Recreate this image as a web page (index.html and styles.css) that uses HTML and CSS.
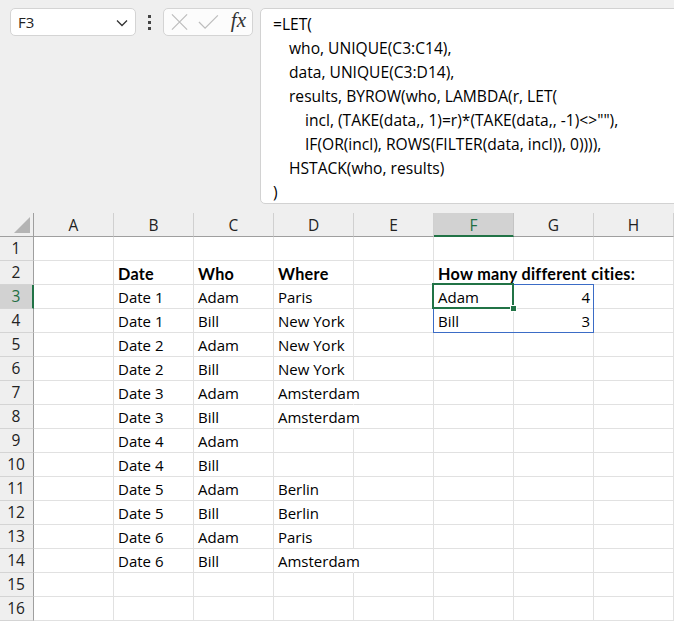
FILE: index.html
```html
<!DOCTYPE html>
<html>
<head>
<meta charset="utf-8">
<link rel="stylesheet" href="styles.css">
</head>
<body>
<div class="top">
  <div class="namebox">
    <span class="ref">F3</span>
    <svg class="chev" width="12" height="8" viewBox="0 0 12 8"><path d="M1 1.5 L6 6.5 L11 1.5" fill="none" stroke="#333" stroke-width="1.3"/></svg>
  </div>
  <div class="dots"><i></i><i></i><i></i></div>
  <div class="fxbox">
    <svg width="18" height="18" viewBox="0 0 18 18"><path d="M1 1 L17 17 M17 1 L1 17" stroke="#bdbdbd" stroke-width="1.3" fill="none"/></svg>
    <svg width="22" height="16" viewBox="0 0 22 16"><path d="M1 8 L7.5 14.5 L21 1" stroke="#bdbdbd" stroke-width="1.3" fill="none"/></svg>
    <span class="fx">fx</span>
  </div>
  <div class="formula">
    <div class="ln">=LET(</div>
    <div class="ln i1">who, UNIQUE(C3:C14),</div>
    <div class="ln i1">data, UNIQUE(C3:D14),</div>
    <div class="ln i1">results, BYROW(who, LAMBDA(r, LET(</div>
    <div class="ln i2">incl, (TAKE(data,, 1)=r)*(TAKE(data,, -1)&lt;&gt;""),</div>
    <div class="ln i2">IF(OR(incl), ROWS(FILTER(data, incl)), 0)))),</div>
    <div class="ln i1">HSTACK(who, results)</div>
    <div class="ln">)</div>
  </div>
</div>

<div class="sheet">
  <div class="corner"><span class="tri"></span></div>
  <div class="ch">A</div><div class="ch">B</div><div class="ch">C</div><div class="ch">D</div><div class="ch">E</div><div class="ch sel">F</div><div class="ch">G</div><div class="ch">H</div>

  <div class="rh">1</div><div class="c"></div><div class="c"></div><div class="c"></div><div class="c"></div><div class="c"></div><div class="c"></div><div class="c"></div><div class="c"></div>

  <div class="rh">2</div><div class="c"></div><div class="c b">Date</div><div class="c b">Who</div><div class="c b">Where</div><div class="c"></div><div class="c b ov">How many different cities:</div><div class="c ov"></div><div class="c"></div>

  <div class="rh sel">3</div><div class="c"></div><div class="c">Date 1</div><div class="c">Adam</div><div class="c">Paris</div><div class="c"></div><div class="c">Adam</div><div class="c r">4</div><div class="c"></div>

  <div class="rh">4</div><div class="c"></div><div class="c">Date 1</div><div class="c">Bill</div><div class="c">New York</div><div class="c"></div><div class="c">Bill</div><div class="c r">3</div><div class="c"></div>

  <div class="rh">5</div><div class="c"></div><div class="c">Date 2</div><div class="c">Adam</div><div class="c">New York</div><div class="c"></div><div class="c"></div><div class="c"></div><div class="c"></div>

  <div class="rh">6</div><div class="c"></div><div class="c">Date 2</div><div class="c">Bill</div><div class="c">New York</div><div class="c"></div><div class="c"></div><div class="c"></div><div class="c"></div>

  <div class="rh">7</div><div class="c"></div><div class="c">Date 3</div><div class="c">Adam</div><div class="c ov">Amsterdam</div><div class="c"></div><div class="c"></div><div class="c"></div><div class="c"></div>

  <div class="rh">8</div><div class="c"></div><div class="c">Date 3</div><div class="c">Bill</div><div class="c ov">Amsterdam</div><div class="c"></div><div class="c"></div><div class="c"></div><div class="c"></div>

  <div class="rh">9</div><div class="c"></div><div class="c">Date 4</div><div class="c">Adam</div><div class="c"></div><div class="c"></div><div class="c"></div><div class="c"></div><div class="c"></div>

  <div class="rh">10</div><div class="c"></div><div class="c">Date 4</div><div class="c">Bill</div><div class="c"></div><div class="c"></div><div class="c"></div><div class="c"></div><div class="c"></div>

  <div class="rh">11</div><div class="c"></div><div class="c">Date 5</div><div class="c">Adam</div><div class="c">Berlin</div><div class="c"></div><div class="c"></div><div class="c"></div><div class="c"></div>

  <div class="rh">12</div><div class="c"></div><div class="c">Date 5</div><div class="c">Bill</div><div class="c">Berlin</div><div class="c"></div><div class="c"></div><div class="c"></div><div class="c"></div>

  <div class="rh">13</div><div class="c"></div><div class="c">Date 6</div><div class="c">Adam</div><div class="c">Paris</div><div class="c"></div><div class="c"></div><div class="c"></div><div class="c"></div>

  <div class="rh">14</div><div class="c"></div><div class="c">Date 6</div><div class="c">Bill</div><div class="c ov">Amsterdam</div><div class="c"></div><div class="c"></div><div class="c"></div><div class="c"></div>

  <div class="rh">15</div><div class="c"></div><div class="c"></div><div class="c"></div><div class="c"></div><div class="c"></div><div class="c"></div><div class="c"></div><div class="c"></div>

  <div class="rh">16</div><div class="c"></div><div class="c"></div><div class="c"></div><div class="c"></div><div class="c"></div><div class="c"></div><div class="c"></div><div class="c"></div>

  <div class="spill"></div>
  <div class="cursor"><span class="handle"></span></div>
</div>
</body>
</html>
```

FILE: styles.css
```css
* { box-sizing: border-box; }
html, body { margin: 0; padding: 0; }
body {
  background: #efefef;
  font-family: "Open Sans", "Noto Sans", sans-serif;
  color: #000;
  width: 674px;
  height: 621px;
  overflow: hidden;
}

.top {
  height: 213px;
  display: flex;
  align-items: flex-start;
  padding: 8px 0 0 10px;
}
.namebox {
  width: 126px;
  height: 28px;
  background: #fff;
  border: 1px solid #d4d4d4;
  border-radius: 5px;
  display: flex;
  align-items: center;
  justify-content: space-between;
  padding: 0 7px 0 7px;
}
.ref {
  font-family: "Open Sans", "Noto Sans", sans-serif;
  font-size: 15px;
  color: #222;
}
.chev { margin-top: 1px; }
.dots {
  width: 27px;
  height: 28px;
  display: flex;
  flex-direction: column;
  align-items: center;
  justify-content: center;
  gap: 3px;
}
.dots i {
  display: block;
  width: 3px;
  height: 3px;
  background: #444;
}
.fxbox {
  width: 90px;
  height: 28px;
  background: #fcfcfc;
  border: 1px solid #d4d4d4;
  border-radius: 5px;
  display: flex;
  align-items: center;
  padding: 0 6px 0 7px;
  gap: 10px;
}
.fx {
  font-family: "Liberation Serif", serif;
  font-style: italic;
  font-size: 21px;
  color: #333;
  line-height: 1;
  margin-left: 2px;
  margin-top: -3px;
}
.formula {
  margin-left: 7px;
  margin-right: -6px;
  flex: 1;
  height: 196px;
  background: #fff;
  border: 1px solid #d2d2d2;
  border-radius: 5px;
  padding: 3px 0 0 12px;
  font-size: 15.6px;
  line-height: 24px;
  color: #000;
}
.formula .ln { white-space: nowrap; height: 24px; }
.formula .i1 { padding-left: 16px; }
.formula .i2 { padding-left: 32px; }

.sheet {
  position: relative;
  display: grid;
  grid-template-columns: 34px repeat(8, 80px);
  grid-template-rows: 24px repeat(16, 24px);
  background: #fff;
}
.corner {
  background: #efefef;
  border-right: 1px solid #9f9f9f;
  border-bottom: 1px solid #9f9f9f;
  position: relative;
}
.tri {
  position: absolute;
  right: 3px;
  bottom: 3px;
  width: 0;
  height: 0;
  border-left: 16px solid transparent;
  border-bottom: 16px solid #b4b4b4;
}
.ch {
  background: #efefef;
  border-right: 1px solid #d0d0d0;
  border-bottom: 1px solid #9f9f9f;
  font-size: 15.5px;
  color: #222;
  text-align: center;
  line-height: 23px;
  padding-top: 1px;
}
.ch.sel {
  background: #d2d2d2;
  color: #1e6e42;
  border-bottom: 2px solid #217346;
  border-right-color: #c4c4c4;
  line-height: 22px;
}
.rh {
  background: #efefef;
  border-right: 1px solid #9f9f9f;
  border-bottom: 1px solid #d4d4d4;
  font-size: 15.5px;
  color: #222;
  text-align: center;
  line-height: 23px;
  padding-right: 1px;
}
.rh.sel {
  background: #d2d2d2;
  color: #1e6e42;
  border-right: 2px solid #217346;
  padding-right: 0;
}
.c {
  border-right: 1px solid #e1e1e1;
  border-bottom: 1px solid #e1e1e1;
  font-size: 15px;
  line-height: 23px;
  padding: 1px 3px 0 4px;
  white-space: nowrap;
  overflow: visible;
}
.c.ov { border-right-color: transparent; }
.c.b {
  font-family: Lato, "Open Sans", sans-serif;
  font-weight: bold;
  font-size: 16.2px;
  letter-spacing: 0.3px;
  padding-top: 1px;
}
.c.r { text-align: right; }

.spill {
  position: absolute;
  left: 433px;
  top: 71px;
  width: 161px;
  height: 49px;
  border: 1px solid #3b6cc6;
  pointer-events: none;
}
.cursor {
  position: absolute;
  left: 432px;
  top: 70px;
  width: 82px;
  height: 26px;
  border: 2px solid #217346;
  pointer-events: none;
}
.handle {
  position: absolute;
  right: -5px;
  bottom: -5px;
  width: 7px;
  height: 7px;
  background: #217346;
  border: 1px solid #fff;
}
```
